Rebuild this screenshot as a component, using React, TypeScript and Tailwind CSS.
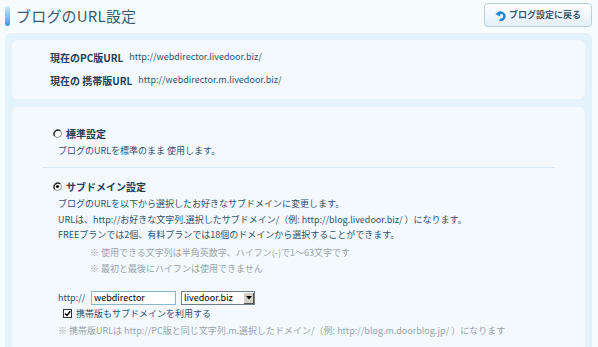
import React from 'react'

const FONT = { fontFamily: '"Noto Sans CJK JP", "Noto Sans", sans-serif' }

function Radio({ checked }: { checked?: boolean }) {
  return (
    <svg width="9" height="9" viewBox="0 0 9 9" className="shrink-0">
      <circle cx="4.5" cy="4.5" r="4" fill="#fff" stroke="#8a8a8a" />
      <path d="M1.6 7 A4 4 0 0 1 7 1.6" stroke="#222" strokeWidth="1.2" fill="none" />
      {checked && <circle cx="4.5" cy="4.5" r="1.6" fill="#111" />}
    </svg>
  )
}

function BackIcon() {
  return (
    <svg width="11" height="11" viewBox="0 0 12 12" className="shrink-0">
      <path d="M3.2 4.2 A4 4 0 1 1 5 10.6" stroke="#1f86d6" strokeWidth="2.6" fill="none" />
      <path d="M0.4 4.4 L6.2 1.2 L5.6 7.2 Z" fill="#1f86d6" />
    </svg>
  )
}

export default function App() {
  return (
    <div className="w-[598px] h-[347px] overflow-hidden bg-[#f6fbfe] text-[#2f536c]" style={FONT}>

      {/* Header */}
      <div className="h-[33px] flex items-start justify-between pl-[5px] pr-[6px]">
        <div className="flex items-center gap-[6px] pt-[6px]">
          <div className="w-[5px] h-[20px] rounded-[3px] bg-gradient-to-b from-[#cdeafb] to-[#3a9ad8]" />
          <h1 className="text-[15px] leading-[20px] text-[#3d5b70] tracking-[0.2px]">ブログのURL設定</h1>
        </div>
        <button className="mt-[3px] h-[24px] w-[108px] flex items-center justify-center gap-[3px] rounded-[4px] border border-[#b9cddd] bg-gradient-to-b from-white to-[#e3eff8] text-[9px] font-bold text-[#3d5a70]">
          <BackIcon />
          <span>ブログ設定に戻る</span>
        </button>
      </div>

      {/* Panel */}
      <div className="ml-[5px] mr-[6px] h-[320px] rounded-t-[6px] bg-[#e4f2fc] px-[7px] pt-[7px] flex flex-col gap-[8px]">

        {/* Current URLs */}
        <div className="h-[59px] rounded-[6px] bg-[#f4f9fd] pt-[9px] pl-[38px] flex flex-col gap-[7px] text-[9px]">
          <div className="h-[16px] flex items-center gap-[6px]">
            <span className="font-bold text-[10px] text-[#1f3e58]">現在のPC版URL</span>
            <span>http://webdirector.livedoor.biz/</span>
          </div>
          <div className="h-[16px] flex items-center gap-[6px]">
            <span className="font-bold text-[10px] text-[#1f3e58]">現在の 携帯版URL</span>
            <span>http://webdirector.m.livedoor.biz/</span>
          </div>
        </div>

        {/* Settings */}
        <div className="flex-1 rounded-t-[6px] bg-[#f4f9fd] pt-[18px] text-[9px]">
          <div className="pl-[41px] h-[16px] flex items-center gap-[4px]">
            <Radio />
            <span className="font-bold text-[10px] text-[#1f3e58]">標準設定</span>
          </div>
          <p className="pl-[46px] mt-[2px] leading-[16px]">ブログのURLを標準のまま 使用します。</p>

          <div className="mx-[30px] mt-[8px] h-px bg-[#d9e8f3]" />

          <div className="pl-[41px] mt-[10px] h-[16px] flex items-center gap-[4px]">
            <Radio checked />
            <span className="font-bold text-[10px] text-[#1f3e58]">サブドメイン設定</span>
          </div>
          <div className="pl-[46px] mt-[2px] leading-[15.5px]">
            <p>ブログのURLを以下から選択したお好きなサブドメインに変更します。</p>
            <p>URLは、http://お好きな文字列.選択したサブドメイン/（例: http://blog.livedoor.biz/ ）になります。</p>
            <p>FREEプランでは2個、有料プランでは18個のドメインから選択することができます。</p>
          </div>
          <div className="pl-[78px] mt-[2px] leading-[16px] text-[#9aa3ab]">
            <p>※ 使用できる文字列は半角英数字、ハイフン(-)で1～63文字です</p>
            <p>※ 最初と最後にハイフンは使用できません</p>
          </div>

          <div className="pl-[46px] mt-[13px] h-[16px] flex items-center">
            <span className="w-[33px]">http://</span>
            <div className="w-[85px] h-[14px] border border-[#8fb4d0] bg-white px-[2px] flex items-center text-[9px] text-black">webdirector</div>
            <div className="ml-[5px] w-[74px] h-[14px] border border-[#6f7f8c] bg-white flex items-center justify-between text-[9px] text-black">
              <span className="pl-[2px]">livedoor.biz</span>
              <span className="w-[11px] h-[12px] bg-[#d4d0c8] border-l border-t border-white flex items-center justify-center shadow-[inset_-1px_-1px_0_#555]">
                <svg width="6" height="4" viewBox="0 0 6 4"><path d="M0 0 H6 L3 3.5 Z" fill="#000" /></svg>
              </span>
            </div>
          </div>
          <div className="pl-[51px] h-[16px] flex items-center gap-[4px]">
            <span className="w-[9px] h-[9px] border border-[#333] bg-white flex items-center justify-center">
              <svg width="7" height="7" viewBox="0 0 7 7"><path d="M1 3.5 L3 5.5 L6.3 1.2" stroke="#000" strokeWidth="1.4" fill="none" /></svg>
            </span>
            <span>携帯版もサブドメインを利用する</span>
          </div>
          <p className="pl-[46px] mt-[1px] leading-[16px] text-[#9aa3ab]">※ 携帯版URLは http://PC版と同じ文字列.m.選択したドメイン/（例: http://blog.m.doorblog.jp/ ）になります</p>
        </div>
      </div>
    </div>
  )
}
